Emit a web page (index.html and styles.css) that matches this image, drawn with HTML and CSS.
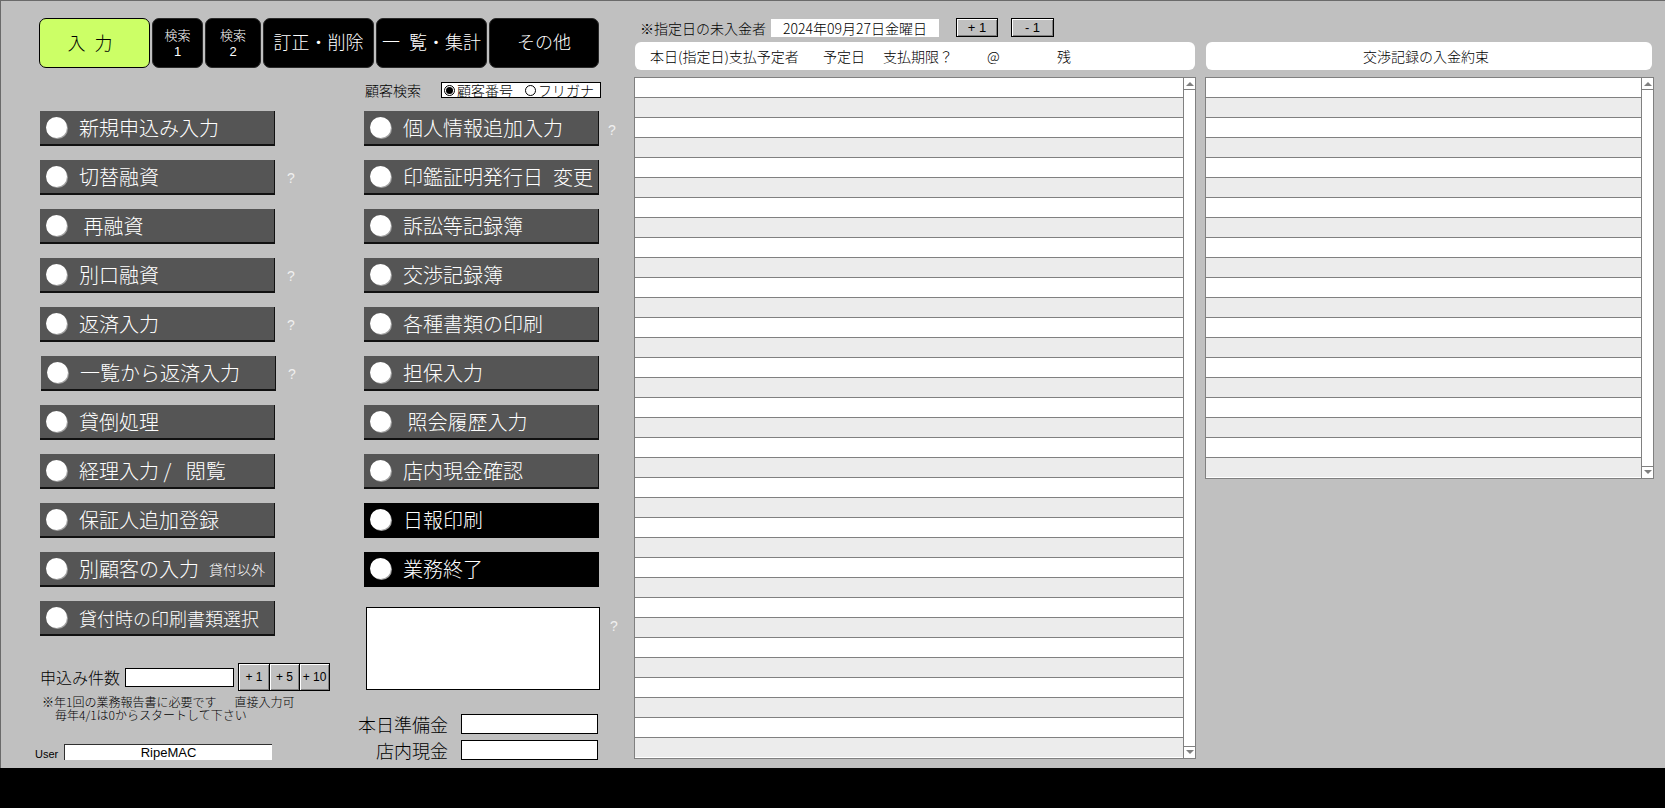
FILE: index.html
```html
<!DOCTYPE html>
<html lang="ja">
<head>
<meta charset="utf-8">
<title>RipeMAC</title>
<link rel="stylesheet" href="styles.css">
</head>
<body>
<div class="screen">
  <section class="control-area">
    <nav class="tabs">
      <div class="tab tab-input">入&ensp;力</div>
      <div class="tab tab-small tab-s1"><span>検索</span><span class="tab-num">1</span></div>
      <div class="tab tab-small tab-s2"><span>検索</span><span class="tab-num">2</span></div>
      <div class="tab tab-edit">訂正・削除</div>
      <div class="tab tab-list">一&ensp;覧・集計</div>
      <div class="tab tab-other">その他</div>
    </nav>
    <div class="columns">
      <div class="col col-left">
        <div class="btn-list">
          <div class="btn-row"><div class="btn"><span class="dot"></span><span class="label">新規申込み入力</span></div></div>
          <div class="btn-row"><div class="btn"><span class="dot"></span><span class="label">切替融資</span></div><span class="help">?</span></div>
          <div class="btn-row"><div class="btn"><span class="dot"></span><span class="label">&nbsp;再融資</span></div></div>
          <div class="btn-row"><div class="btn"><span class="dot"></span><span class="label">別口融資</span></div><span class="help">?</span></div>
          <div class="btn-row"><div class="btn"><span class="dot"></span><span class="label">返済入力</span></div><span class="help">?</span></div>
          <div class="btn-row"><div class="btn btn-shift"><span class="dot"></span><span class="label">一覧から返済入力</span></div><span class="help">?</span></div>
          <div class="btn-row"><div class="btn"><span class="dot"></span><span class="label">貸倒処理</span></div></div>
          <div class="btn-row"><div class="btn"><span class="dot"></span><span class="label">経理入力 / &ensp;閲覧</span></div></div>
          <div class="btn-row"><div class="btn"><span class="dot"></span><span class="label">保証人追加登録</span></div></div>
          <div class="btn-row"><div class="btn"><span class="dot"></span><span class="label">別顧客の入力<small class="sub">貸付以外</small></span></div></div>
          <div class="btn-row"><div class="btn"><span class="dot"></span><span class="label label-narrow">貸付時の印刷書類選択</span></div></div>
        </div>
        <div class="count-row">
          <span class="count-label">申込み件数</span>
          <div class="count-field"></div>
          <div class="step-group">
            <div class="step">+ 1</div>
            <div class="step">+ 5</div>
            <div class="step">+ 10</div>
          </div>
        </div>
        <p class="note">※年1回の業務報告書に必要です&ensp;&ensp;&ensp;直接入力可<span class="note-2">毎年4/1は0からスタートして下さい</span></p>
        <div class="user-row">
          <span class="user-label">User</span>
          <div class="user-field">RipeMAC</div>
        </div>
      </div>
      <div class="col col-mid">
        <div class="search-row">
          <span class="search-label">顧客検索</span>
          <div class="radio-box">
            <span class="radio on"></span><span class="radio-text">顧客番号</span>
            <span class="radio radio-2"></span><span class="radio-text">フリガナ</span>
          </div>
        </div>
        <div class="btn-list btn-list-mid">
          <div class="btn-row"><div class="btn"><span class="dot"></span><span class="label">個人情報追加入力</span></div><span class="help help-mid">?</span></div>
          <div class="btn-row"><div class="btn"><span class="dot"></span><span class="label">印鑑証明発行日&ensp;変更</span></div></div>
          <div class="btn-row"><div class="btn"><span class="dot"></span><span class="label">訴訟等記録簿</span></div></div>
          <div class="btn-row"><div class="btn"><span class="dot"></span><span class="label">交渉記録簿</span></div></div>
          <div class="btn-row"><div class="btn"><span class="dot"></span><span class="label">各種書類の印刷</span></div></div>
          <div class="btn-row"><div class="btn"><span class="dot"></span><span class="label">担保入力</span></div></div>
          <div class="btn-row"><div class="btn"><span class="dot"></span><span class="label">&nbsp;照会履歴入力</span></div></div>
          <div class="btn-row"><div class="btn"><span class="dot"></span><span class="label">店内現金確認</span></div></div>
          <div class="btn-row"><div class="btn btn-black"><span class="dot"></span><span class="label">日報印刷</span></div></div>
          <div class="btn-row"><div class="btn btn-black"><span class="dot"></span><span class="label">業務終了</span></div></div>
        </div>
        <div class="memo-row">
          <div class="memo"></div>
          <span class="help help-memo">?</span>
        </div>
        <div class="cash-grid">
          <span class="cash-label">本日準備金</span><div class="cash-field"></div>
          <span class="cash-label">店内現金</span><div class="cash-field"></div>
        </div>
      </div>
    </div>
  </section>

  <section class="list-panel panel-due">
    <div class="date-row">
      <span class="date-label">※指定日の未入金者</span>
      <div class="date-box">2024年09月27日金曜日</div>
      <div class="bevel-btn btn-plus">+ 1</div>
      <div class="bevel-btn btn-minus">- 1</div>
    </div>
    <div class="list-head head-due">
      <span>本日(指定日)支払予定者</span>
      <span>予定日</span>
      <span>支払期限？</span>
      <span>@</span>
      <span>残</span>
    </div>
    <div class="list list-due">
      <div class="rows">
        <div class="row"></div><div class="row"></div><div class="row"></div><div class="row"></div><div class="row"></div>
        <div class="row"></div><div class="row"></div><div class="row"></div><div class="row"></div><div class="row"></div>
        <div class="row"></div><div class="row"></div><div class="row"></div><div class="row"></div><div class="row"></div>
        <div class="row"></div><div class="row"></div><div class="row"></div><div class="row"></div><div class="row"></div>
        <div class="row"></div><div class="row"></div><div class="row"></div><div class="row"></div><div class="row"></div>
        <div class="row"></div><div class="row"></div><div class="row"></div><div class="row"></div><div class="row"></div>
        <div class="row"></div><div class="row"></div><div class="row"></div><div class="row"></div>
      </div>
      <div class="scroll"><span class="arrow arrow-up"></span><span class="arrow arrow-down"></span></div>
    </div>
  </section>

  <section class="list-panel panel-promise">
    <div class="list-head head-promise">交渉記録の入金約束</div>
    <div class="list list-promise">
      <div class="rows">
        <div class="row"></div><div class="row"></div><div class="row"></div><div class="row"></div><div class="row"></div>
        <div class="row"></div><div class="row"></div><div class="row"></div><div class="row"></div><div class="row"></div>
        <div class="row"></div><div class="row"></div><div class="row"></div><div class="row"></div><div class="row"></div>
        <div class="row"></div><div class="row"></div><div class="row"></div><div class="row"></div><div class="row"></div>
      </div>
      <div class="scroll"><span class="arrow arrow-up"></span><span class="arrow arrow-down"></span></div>
    </div>
  </section>
</div>
<footer class="footer"></footer>
</body>
</html>
```

FILE: styles.css
```css
html, body {
  margin: 0;
  padding: 0;
}

body {
  background: #000;
  font-family: "Noto Sans CJK JP", "Noto Sans", sans-serif;
  font-weight: 300;
  color: #000;
}

.screen {
  display: flex;
  height: 768px;
  background: #c0c0c0;
  box-shadow: inset 1px 1px 0 #6a6a6a;
  overflow: hidden;
}

.footer {
  height: 40px;
  background: #000;
}

/* ---------- left control area ---------- */
.control-area {
  flex: none;
  width: 634px;
  box-sizing: border-box;
  padding: 18px 0 0 39px;
}

.tabs {
  display: flex;
  gap: 2px;
  height: 50px;
}

.tab {
  box-sizing: border-box;
  height: 50px;
  border: 1px solid #2a2a2a;
  border-radius: 7px;
  background: #000;
  color: #fff;
  display: flex;
  align-items: center;
  justify-content: center;
  font-size: 18px;
  line-height: 1;
}

.tab-input {
  width: 111px;
  background: #ccff66;
  color: #000;
  border-color: #000;
  padding-right: 9px;
  padding-bottom: 2px;
}

.tab-small {
  flex-direction: column;
  font-size: 13px;
  line-height: 17px;
  padding-bottom: 1px;
}

.tab-num {
  font-family: "Liberation Sans", sans-serif;
  font-size: 13px;
}

.tab-s1 { width: 51px; }
.tab-s2 { width: 56px; }
.tab-edit { width: 111px; padding-bottom: 4px; }
.tab-list { width: 111px; padding-bottom: 4px; }
.tab-other { width: 110px; padding-bottom: 4px; }

.columns {
  display: flex;
  margin-top: 14px;
  padding-left: 1px;
}

.col-left {
  width: 324px;
  padding-top: 29px;
  display: flex;
  flex-direction: column;
}

.col-mid {
  width: 270px;
  display: flex;
  flex-direction: column;
}

.btn-list {
  display: flex;
  flex-direction: column;
  gap: 14px;
}

.btn-list-mid {
  margin-top: 13px;
}

.btn-row {
  display: flex;
  align-items: center;
  height: 35px;
}

.btn {
  flex: none;
  box-sizing: border-box;
  width: 235px;
  height: 35px;
  background: #555555;
  border-right: 1px solid #111;
  border-bottom: 2px solid #111;
  display: flex;
  align-items: center;
  padding-left: 6px;
  color: #fff;
  font-size: 20px;
  line-height: 1;
  white-space: nowrap;
}

.btn-shift {
  margin-left: 1px;
}

.btn-black {
  background: #000;
  border-color: #000;
}

.dot {
  flex: none;
  width: 21px;
  height: 21px;
  border-radius: 50%;
  background: #fff;
  box-shadow: 1px 1px 0 #a0a0a0;
  margin-right: 12px;
}

.label {
  display: flex;
  align-items: center;
}

.label-narrow {
  font-size: 18px;
}

.sub {
  font-size: 14px;
  margin-left: 10px;
}

.help {
  margin-left: 12px;
  color: #f0f0f0;
  font-family: "Liberation Sans", sans-serif;
  font-size: 14px;
  line-height: 1;
}

.help-mid {
  margin-left: 9px;
  align-self: flex-start;
  margin-top: 12px;
}

/* count row */
.count-row {
  display: flex;
  align-items: center;
  margin-top: 27px;
  height: 28px;
}

.count-label {
  font-size: 16px;
  line-height: 1;
  white-space: nowrap;
}

.count-field {
  margin-left: 5px;
  width: 109px;
  height: 19px;
  box-sizing: border-box;
  background: #fff;
  border: 1px solid #000;
}

.step-group {
  display: flex;
  margin-left: 4px;
  height: 28px;
  border: 1px solid #000;
  box-sizing: border-box;
}

.step {
  box-sizing: border-box;
  width: 30px;
  display: flex;
  align-items: center;
  justify-content: center;
  font-family: "Liberation Sans", sans-serif;
  font-size: 12px;
  background: #c0c0c0;
  box-shadow: inset 1px 1px 0 #fff, inset -1px -1px 0 #808080;
}

.step + .step {
  border-left: 1px solid #000;
}

.note {
  margin: 4px 0 0 2px;
  font-size: 12px;
  line-height: 13px;
  white-space: nowrap;
}

.note-2 {
  display: block;
  padding-left: 13px;
}

.user-row {
  display: flex;
  align-items: flex-end;
  margin: 23px 0 0 -5px;
  height: 16px;
}

.user-label {
  width: 29px;
  font-family: "Liberation Sans", sans-serif;
  font-size: 11px;
  line-height: 12px;
}

.user-field {
  width: 208px;
  height: 16px;
  box-sizing: border-box;
  background: #fff;
  border-top: 1px solid #303030;
  border-left: 1px solid #303030;
  text-align: center;
  font-family: "Liberation Sans", sans-serif;
  font-size: 13px;
  line-height: 15px;
}

/* middle column */
.search-row {
  display: flex;
  align-items: center;
  height: 16px;
}

.search-label {
  width: 76px;
  padding-left: 1px;
  font-size: 14px;
  line-height: 1;
}

.radio-box {
  box-sizing: border-box;
  width: 160px;
  height: 16px;
  background: #fff;
  border: 1px solid #000;
  display: flex;
  align-items: center;
  padding-left: 2px;
  font-size: 14px;
  line-height: 1;
}

.radio {
  position: relative;
  flex: none;
  box-sizing: border-box;
  width: 11px;
  height: 11px;
  border: 1px solid #000;
  border-radius: 50%;
  margin-right: 2px;
}

.radio.on::after {
  content: "";
  position: absolute;
  left: 1px;
  top: 1px;
  width: 7px;
  height: 7px;
  border-radius: 50%;
  background: #000;
}

.radio-2 {
  margin-left: 12px;
}

.memo-row {
  display: flex;
  margin-top: 20px;
}

.memo {
  margin-left: 2px;
  width: 234px;
  height: 83px;
  box-sizing: border-box;
  background: #fff;
  border: 1px solid #000;
}

.help-memo {
  margin-left: 10px;
  margin-top: 12px;
}

.cash-grid {
  display: grid;
  grid-template-columns: auto 137px;
  column-gap: 13px;
  row-gap: 6px;
  justify-content: end;
  width: 234px;
  margin-top: 24px;
}

.cash-label {
  font-size: 18px;
  line-height: 20px;
  text-align: right;
  white-space: nowrap;
}

.cash-field {
  height: 20px;
  box-sizing: border-box;
  background: #fff;
  border: 1px solid #000;
}

/* ---------- list panels ---------- */
.list-panel {
  flex: none;
  display: flex;
  flex-direction: column;
}

.panel-due {
  width: 562px;
  padding-top: 18px;
}

.panel-promise {
  width: 449px;
  margin-left: 9px;
  padding-top: 42px;
}

.date-row {
  display: flex;
  align-items: center;
  height: 19px;
  font-size: 14px;
  line-height: 1;
}

.date-label {
  margin-left: 6px;
  white-space: nowrap;
}

.date-box {
  width: 168px;
  height: 18px;
  background: #fff;
  display: flex;
  align-items: center;
  justify-content: center;
  margin-left: 5px;
  font-size: 14px;
}

.bevel-btn {
  box-sizing: border-box;
  height: 19px;
  border: 1px solid #000;
  background: #c0c0c0;
  box-shadow: inset 1px 1px 0 #fff, inset -1px -1px 0 #808080;
  display: flex;
  align-items: center;
  justify-content: center;
  font-family: "Liberation Sans", sans-serif;
  font-size: 13px;
}

.btn-plus {
  width: 42px;
  margin-left: 17px;
}

.btn-minus {
  width: 43px;
  margin-left: 13px;
}

.list-head {
  box-sizing: border-box;
  height: 28px;
  background: #fff;
  border-radius: 6px;
  font-size: 14px;
  line-height: 1;
  display: flex;
  align-items: center;
  white-space: nowrap;
}

.head-due {
  margin: 5px 1px 0;
  display: grid;
  grid-template-columns: 173px 60px 104px 70px auto;
  padding-left: 15px;
}

.head-promise {
  margin: 0 2px 0 1px;
  justify-content: center;
  padding-right: 6px;
}

.list {
  box-sizing: border-box;
  margin-top: 7px;
  display: flex;
  border: 1px solid #808080;
  background: #fff;
}

.list-due {
  height: 682px;
}

.list-promise {
  height: 402px;
}

.rows {
  flex: 1;
  display: flex;
  flex-direction: column;
}

.row {
  flex: none;
  height: 19px;
  background: #fff;
  border-bottom: 1px solid #808080;
}

.row:nth-child(even) {
  background: #ececec;
}

.row:last-child {
  border-bottom: none;
}

.scroll {
  flex: none;
  width: 11px;
  border-left: 1px solid #808080;
  background: #fff;
  display: flex;
  flex-direction: column;
  justify-content: space-between;
}

.arrow {
  position: relative;
  height: 11px;
}

.arrow-up {
  border-bottom: 1px solid #808080;
}

.arrow-down {
  border-top: 1px solid #808080;
}

.arrow::after {
  content: "";
  position: absolute;
  left: 2px;
  top: 4px;
  border-left: 4px solid transparent;
  border-right: 4px solid transparent;
}

.arrow-up::after {
  border-bottom: 4px solid #808080;
}

.arrow-down::after {
  top: 3px;
  border-top: 4px solid #808080;
}
```
